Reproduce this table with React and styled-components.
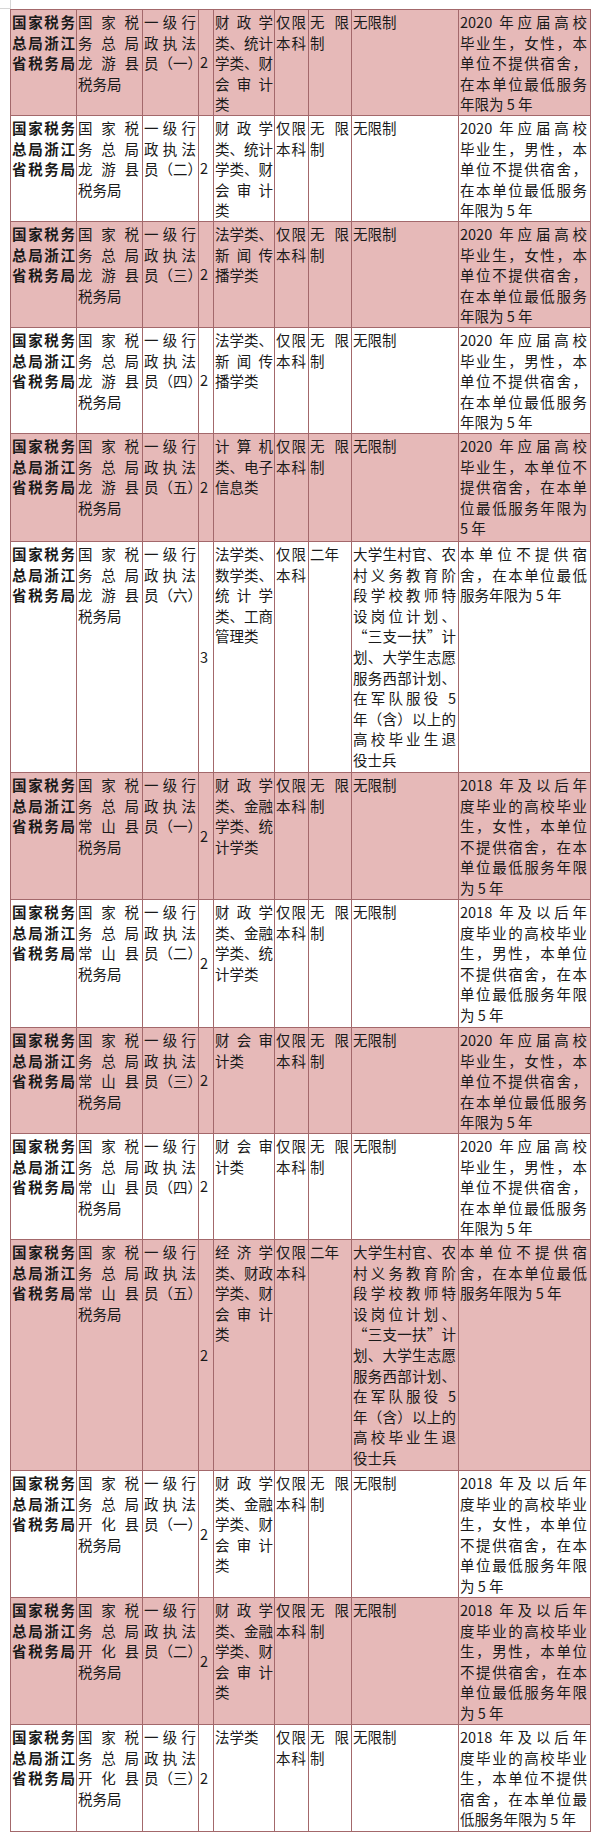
import React from 'react';
import styled, { createGlobalStyle } from 'styled-components';

const GlobalStyle = createGlobalStyle`
  html, body {
    margin: 0;
    padding: 0;
    background: #ffffff;
  }
  body {
    font-family: "Noto Sans CJK SC", "Noto Sans", sans-serif;
    color: #1a1a1a;
  }
`;

const Page = styled.div`
  width: 597px;
  padding-bottom: 7px;
`;

// faint corner left over from the previous table in the sheet
const Stub = styled.div`
  width: 10px;
  height: 8px;
  border-right: 1px solid #d6d6d6;
  border-bottom: 1px solid #d6d6d6;
`;

const Sheet = styled.table`
  margin-left: 10px;
  width: 580px;
  table-layout: fixed;
  border-collapse: collapse;
  font-size: 14.5px;
  line-height: 20.6px;
`;

const Row = styled.tr`
  height: ${(p) => p.$h}px;
  background: ${(p) => (p.$pink ? '#e6b9b8' : '#ffffff')};
`;

const Cell = styled.td`
  border: 1px solid #a3686b;
  padding: ${(p) => p.$pad || '2px 3px 0 1px'};
  vertical-align: ${(p) => (p.$mid ? 'middle' : 'top')};
  font-weight: ${(p) => (p.$bold ? 700 : 400)};
  overflow: visible;
`;

const Line = styled.span`
  display: block;
  white-space: nowrap;
  text-align: ${(p) => (p.$j ? 'justify' : 'left')};
  text-align-last: ${(p) => (p.$j ? 'justify' : 'left')};
`;

const Lines = ({ lines, all }) =>
  lines.map((t, i) => (
    <Line key={i} $j={all || i < lines.length - 1}>
      {t}
    </Line>
  ));

const widths = [66, 66, 56, 15, 61, 34, 43, 107, 132];

const unit = (county) => ['国家税', '务总局', county, '税务局'];

const note2020 = (sex) => [
  '2020 年应届高校',
  `毕业生，${sex}，本`,
  '单位不提供宿舍，',
  '在本单位最低服务',
  '年限为 5 年',
];

const note2018 = (sex) => [
  '2018 年及以后年',
  '度毕业的高校毕业',
  `生，${sex}，本单位`,
  '不提供宿舍，在本',
  '单位最低服务年限',
  '为 5 年',
];

const noDorm = ['本单位不提供宿', '舍，在本单位最低', '服务年限为 5 年'];

const grassroots = [
  '大学生村官、农',
  '村义务教育阶',
  '段学校教师特',
  '设岗位计划、',
  '“三支一扶”计',
  '划、大学生志愿',
  '服务西部计划、',
  '在军队服役 5',
  '年（含）以上的',
  '高校毕业生退',
  '役士兵',
];

const caizheng = ['财政学', '类、统计', '学类、财', '会审计', '类'];
const jinrong = ['财政学', '类、金融', '学类、统', '计学类'];
const faxue = ['法学类、', '新闻传', '播学类'];

const rows = [
  { h: 106, county: '龙游县', seq: '一', num: '2', major: caizheng, exp: ['无限', '制'], cond: ['无限制'], note: note2020('女性') },
  { h: 106, county: '龙游县', seq: '二', num: '2', major: caizheng, exp: ['无限', '制'], cond: ['无限制'], note: note2020('男性') },
  { h: 106, county: '龙游县', seq: '三', num: '2', major: faxue, exp: ['无限', '制'], cond: ['无限制'], note: note2020('女性') },
  { h: 106, county: '龙游县', seq: '四', num: '2', major: faxue, exp: ['无限', '制'], cond: ['无限制'], note: note2020('男性') },
  {
    h: 108, county: '龙游县', seq: '五', num: '2',
    major: ['计算机', '类、电子', '信息类'], exp: ['无限', '制'], cond: ['无限制'],
    note: ['2020 年应届高校', '毕业生，本单位不', '提供宿舍，在本单', '位最低服务年限为', '5 年'],
  },
  {
    h: 231, county: '龙游县', seq: '六', num: '3',
    major: ['法学类、', '数学类、', '统计学', '类、工商', '管理类'], exp: ['二年'], cond: grassroots, note: noDorm,
  },
  { h: 127, county: '常山县', seq: '一', num: '2', major: jinrong, exp: ['无限', '制'], cond: ['无限制'], note: note2018('女性') },
  { h: 128, county: '常山县', seq: '二', num: '2', major: jinrong, exp: ['无限', '制'], cond: ['无限制'], note: note2018('男性') },
  { h: 106, county: '常山县', seq: '三', num: '2', major: ['财会审', '计类'], exp: ['无限', '制'], cond: ['无限制'], note: note2020('女性') },
  { h: 106, county: '常山县', seq: '四', num: '2', major: ['财会审', '计类'], exp: ['无限', '制'], cond: ['无限制'], note: note2020('男性') },
  {
    h: 231, county: '常山县', seq: '五', num: '2',
    major: ['经济学', '类、财政', '学类、财', '会审计', '类'], exp: ['二年'], cond: grassroots, note: noDorm,
  },
  {
    h: 127, county: '开化县', seq: '一', num: '2',
    major: ['财政学', '类、金融', '学类、财', '会审计', '类'], exp: ['无限', '制'], cond: ['无限制'], note: note2018('女性'),
  },
  {
    h: 127, county: '开化县', seq: '二', num: '2',
    major: ['财政学', '类、金融', '学类、财', '会审计', '类'], exp: ['无限', '制'], cond: ['无限制'], note: note2018('男性'),
  },
  {
    h: 107, county: '开化县', seq: '三', num: '2',
    major: ['法学类'], exp: ['无限', '制'], cond: ['无限制'],
    note: ['2018 年及以后年', '度毕业的高校毕业', '生，本单位不提供', '宿舍，在本单位最', '低服务年限为 5 年'],
  },
];

const App = () => (
  <Page>
    <GlobalStyle />
    <Stub />
    <Sheet>
      <colgroup>
        {widths.map((w, i) => (
          <col key={i} style={{ width: w }} />
        ))}
      </colgroup>
      <tbody>
        {rows.map((r, i) => (
          <Row key={i} $h={r.h} $pink={i % 2 === 0}>
            <Cell $bold $pad="2px 1px 0 1px">
              <Lines lines={['国家税务', '总局浙江', '省税务局']} all />
            </Cell>
            <Cell>
              <Lines lines={unit(r.county)} />
            </Cell>
            <Cell $pad="2px 2px 0 1px">
              <Lines lines={['一级行', '政执法', `员（${r.seq}）`]} all />
            </Cell>
            <Cell $mid $pad="0 1px">
              {r.num}
            </Cell>
            <Cell $pad="2px 1px 0 1px">
              <Lines lines={r.major} />
            </Cell>
            <Cell $pad="2px 2px 0 1px">
              <Lines lines={['仅限', '本科']} all />
            </Cell>
            <Cell $pad="2px 2px 0 1px">
              <Lines lines={r.exp} />
            </Cell>
            <Cell $pad="2px 2px 0 1px">
              <Lines lines={r.cond} />
            </Cell>
            <Cell>
              <Lines lines={r.note} />
            </Cell>
          </Row>
        ))}
      </tbody>
    </Sheet>
  </Page>
);

export default App;
